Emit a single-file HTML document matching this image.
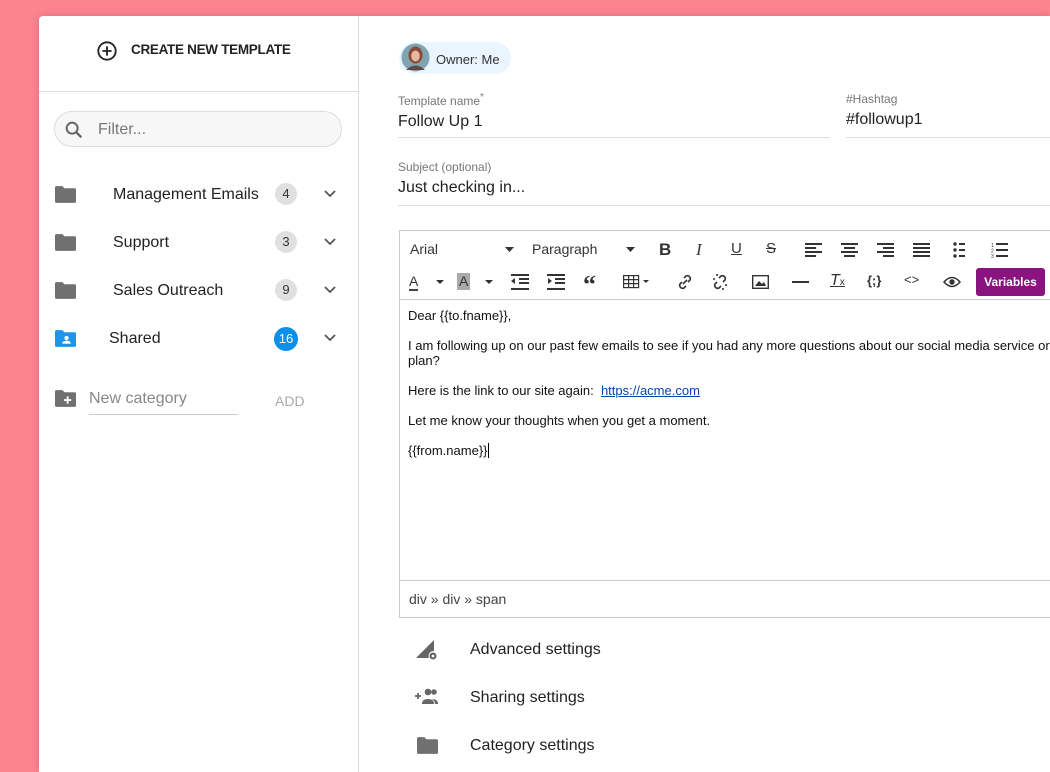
<!DOCTYPE html>
<html><head><style>
*{box-sizing:border-box;margin:0;padding:0}
html,body{width:1050px;height:772px;overflow:hidden}
body{background:#fc8490;font-family:"Liberation Sans",Roboto,sans-serif;color:#222;position:relative}
.card{position:absolute;left:39px;top:16px;width:1011px;height:756px;background:#fff;border-radius:4px 0 0 0;box-shadow:0 0 8px rgba(0,0,0,.15);overflow:hidden}
.side{position:absolute;left:0;top:0;width:320px;height:756px;border-right:1px solid #ddd}
.abs{position:absolute}
.cnt{position:absolute;width:22px;height:22px;border-radius:11px;background:#e0e0e0;font-size:13px;text-align:center;line-height:22px;color:#333}
.lbl{position:absolute;font-size:16px;color:#222}
.flabel{font-size:12px;color:#777}
.field{position:absolute;border-bottom:1px solid #ddd}
.field .v{font-size:16px;color:#222;margin-top:5px;height:22px}
.tb{position:absolute;font-size:15px;color:#333}
.ed{font-family:"Liberation Sans",Arial,sans-serif;font-size:13px;color:#111}
</style></head><body>
<div class="card">
 <div class="side">
  <svg class="abs" style="left:57px;top:24px" width="22" height="22" viewBox="0 0 24 24"><circle cx="12" cy="12" r="9.5" fill="none" stroke="#222" stroke-width="2"/><path d="M12 7v10M7 12h10" stroke="#222" stroke-width="2"/></svg>
  <div class="abs" style="left:92px;top:26px;font-size:13.5px;font-weight:bold;color:#222;letter-spacing:-.3px">CREATE NEW TEMPLATE</div>
  <div class="abs" style="left:0;top:75px;width:320px;border-top:1px solid #ddd"></div>
  <div class="abs" style="left:15px;top:95px;width:288px;height:36px;border:1px solid #ddd;border-radius:18px;background:#f7f7f7"></div>
  <svg class="abs" style="left:24px;top:103px" width="22" height="22" viewBox="0 0 24 24"><circle cx="10" cy="10" r="6" fill="none" stroke="#666" stroke-width="2.2"/><path d="M14.5 14.5l5.5 5.5" stroke="#666" stroke-width="2.6"/></svg>
  <div class="abs" style="left:59px;top:105px;font-size:16px;color:#777">Filter...</div>

  <svg class="abs" style="left:16px;top:170px" width="21" height="17" viewBox="0 0 20 16"><path d="M0 1.5Q0 0 1.5 0H7l2 2h9.5Q20 2 20 3.5v11q0 1.5-1.5 1.5h-17Q0 16 0 14.5z" fill="#707070"/></svg>
  <div class="lbl" style="left:74px;top:170px">Management Emails</div>
  <div class="cnt" style="left:236px;top:167px">4</div>
  <svg class="abs" style="left:283px;top:171px" width="16" height="14" viewBox="0 0 16 14"><path d="M3 4l5 5 5-5" fill="none" stroke="#555" stroke-width="1.8"/></svg>

  <svg class="abs" style="left:16px;top:218px" width="21" height="17" viewBox="0 0 20 16"><path d="M0 1.5Q0 0 1.5 0H7l2 2h9.5Q20 2 20 3.5v11q0 1.5-1.5 1.5h-17Q0 16 0 14.5z" fill="#707070"/></svg>
  <div class="lbl" style="left:74px;top:218px">Support</div>
  <div class="cnt" style="left:236px;top:215px">3</div>
  <svg class="abs" style="left:283px;top:219px" width="16" height="14" viewBox="0 0 16 14"><path d="M3 4l5 5 5-5" fill="none" stroke="#555" stroke-width="1.8"/></svg>

  <svg class="abs" style="left:16px;top:266px" width="21" height="17" viewBox="0 0 20 16"><path d="M0 1.5Q0 0 1.5 0H7l2 2h9.5Q20 2 20 3.5v11q0 1.5-1.5 1.5h-17Q0 16 0 14.5z" fill="#707070"/></svg>
  <div class="lbl" style="left:74px;top:266px">Sales Outreach</div>
  <div class="cnt" style="left:236px;top:263px">9</div>
  <svg class="abs" style="left:283px;top:267px" width="16" height="14" viewBox="0 0 16 14"><path d="M3 4l5 5 5-5" fill="none" stroke="#555" stroke-width="1.8"/></svg>

  <svg class="abs" style="left:16px;top:314px" width="21" height="17" viewBox="0 0 20 16"><path d="M0 1.5Q0 0 1.5 0H7l2 2h9.5Q20 2 20 3.5v11q0 1.5-1.5 1.5h-17Q0 16 0 14.5z" fill="#1e96e8"/><circle cx="11" cy="7.5" r="2" fill="#fff"/><path d="M7 13q0-3 4-3t4 3z" fill="#fff"/></svg>
  <div class="lbl" style="left:70px;top:314px">Shared</div>
  <div class="cnt" style="left:235px;top:311px;width:24px;height:24px;border-radius:12px;line-height:24px;background:#0c8fe8;color:#fff">16</div>
  <svg class="abs" style="left:283px;top:315px" width="16" height="14" viewBox="0 0 16 14"><path d="M3 4l5 5 5-5" fill="none" stroke="#555" stroke-width="1.8"/></svg>

  <svg class="abs" style="left:16px;top:374px" width="21" height="17" viewBox="0 0 20 16"><path d="M0 1.5Q0 0 1.5 0H7l2 2h9.5Q20 2 20 3.5v11q0 1.5-1.5 1.5h-17Q0 16 0 14.5z" fill="#707070"/><path d="M12 6v7M8.5 9.5h7" stroke="#fff" stroke-width="1.8"/></svg>
  <div class="abs" style="left:50px;top:374px;font-size:16px;color:#888;width:149px;height:25px;border-bottom:1px solid #ccc">New category</div>
  <div class="abs" style="left:236px;top:377px;font-size:14px;color:#aaa">ADD</div>
 </div>

 <div class="abs" style="left:360px;top:26px;width:112px;height:32px;border-radius:16px;background:#eaf5ff"></div>
 <svg class="abs" style="left:362px;top:27px" width="29" height="29" viewBox="0 0 29 29"><circle cx="14.5" cy="14.5" r="14" fill="#7fa3b0"/><ellipse cx="14.5" cy="12" rx="7" ry="8.5" fill="#8a4a35"/><ellipse cx="14.5" cy="13" rx="4.3" ry="5.5" fill="#e6b9a0"/><path d="M5 27q9.5-9 19 0" fill="#5e4a45"/></svg>
 <div class="abs" style="left:397px;top:36px;font-size:13px;color:#333">Owner: Me</div>

 <div class="field" style="left:359px;top:76px;width:432px;height:46px"><div class="flabel">Template name<sup>*</sup></div><div class="v">Follow Up 1</div></div>
 <div class="field" style="left:807px;top:76px;width:300px;height:46px"><div class="flabel">#Hashtag</div><div class="v">#followup1</div></div>
 <div class="field" style="left:359px;top:144px;width:760px;height:46px"><div class="flabel">Subject (optional)</div><div class="v">Just checking in...</div></div>

 <div class="abs" style="left:360px;top:214px;width:720px;height:388px;border:1px solid #ccc"></div>
 <div class="abs" style="left:361px;top:283px;width:720px;border-top:1px solid #ccc"></div>
 <div class="abs" style="left:361px;top:564px;width:720px;border-top:1px solid #ccc"></div>
 <div class="tb" style="left:371px;top:225px;font-size:14px">Arial</div>
 <svg class="abs" style="left:466px;top:231px" width="9" height="5"><path d="M0 0h9L4.5 5z" fill="#333"/></svg>
 <div class="tb" style="left:493px;top:225px;font-size:14px">Paragraph</div>
 <svg class="abs" style="left:587px;top:231px" width="9" height="5"><path d="M0 0h9L4.5 5z" fill="#333"/></svg>
 <div class="tb" style="left:620px;top:224px;font-weight:bold;font-size:17px">B</div>
 <div class="tb" style="left:657px;top:224px;font-style:italic;font-size:17px;font-family:'Liberation Serif'">I</div>
 <div class="tb" style="left:692px;top:224px;text-decoration:underline">U</div>
 <div class="tb" style="left:727px;top:224px;text-decoration:line-through">S</div>
 <svg class="abs" style="left:766px;top:226px" width="160" height="16" viewBox="0 0 160 16" fill="#333">
  <rect x="0" y="1" width="17" height="2"/><rect x="0" y="5" width="11" height="2"/><rect x="0" y="9" width="17" height="2"/><rect x="0" y="13" width="11" height="2"/>
  <rect x="36" y="1" width="17" height="2"/><rect x="39" y="5" width="11" height="2"/><rect x="36" y="9" width="17" height="2"/><rect x="39" y="13" width="11" height="2"/>
  <rect x="72" y="1" width="17" height="2"/><rect x="78" y="5" width="11" height="2"/><rect x="72" y="9" width="17" height="2"/><rect x="78" y="13" width="11" height="2"/>
  <rect x="108" y="1" width="17" height="2"/><rect x="108" y="5" width="17" height="2"/><rect x="108" y="9" width="17" height="2"/><rect x="108" y="13" width="17" height="2"/>
  <circle cx="150" cy="2" r="1.7"/><circle cx="150" cy="8" r="1.7"/><circle cx="150" cy="14" r="1.7"/><rect x="154" y="1" width="6" height="2"/><rect x="154" y="7" width="6" height="2"/><rect x="154" y="13" width="6" height="2"/>
 </svg>
 <svg class="abs" style="left:952px;top:226px" width="17" height="16" viewBox="0 0 17 16" fill="#333"><text x="0" y="5" font-size="5">1</text><text x="0" y="10.5" font-size="5">2</text><text x="0" y="16" font-size="5">3</text><rect x="5" y="1" width="12" height="2"/><rect x="5" y="7" width="12" height="2"/><rect x="5" y="13" width="12" height="2"/></svg>

 <div class="tb" style="left:370px;top:257px;font-size:14px;border-bottom:2px solid #444;line-height:16px">A</div>
 <svg class="abs" style="left:397px;top:264px" width="8" height="4"><path d="M0 0h8L4 4z" fill="#333"/></svg>
 <div class="tb" style="left:418px;top:257px;font-size:14px;background:#aaa;padding:0 2px;line-height:17px">A</div>
 <svg class="abs" style="left:446px;top:264px" width="8" height="4"><path d="M0 0h8L4 4z" fill="#333"/></svg>
 <svg class="abs" style="left:472px;top:258px" width="18" height="16" viewBox="0 0 18 16" fill="#333"><rect x="0" y="0" width="18" height="2"/><rect x="8" y="4" width="10" height="2"/><rect x="8" y="8" width="10" height="2"/><rect x="0" y="14" width="18" height="2"/><path d="M0 7l4-3v6z"/></svg>
 <svg class="abs" style="left:508px;top:258px" width="18" height="16" viewBox="0 0 18 16" fill="#333"><rect x="0" y="0" width="18" height="2"/><rect x="8" y="4" width="10" height="2"/><rect x="8" y="8" width="10" height="2"/><rect x="0" y="14" width="18" height="2"/><path d="M5 7l-4-3v6z"/></svg>
 <div class="tb" style="left:544px;top:254px;font-size:26px;font-weight:bold;font-family:'Liberation Serif'">“</div>
 <svg class="abs" style="left:584px;top:259px" width="30" height="14" viewBox="0 0 30 14" fill="none" stroke="#333" stroke-width="1.2"><rect x=".6" y=".6" width="15" height="12"/><path d="M.6 4.6h15M.6 8.6h15M5.6.6v12M10.6.6v12"/><path d="M20 5h6l-3 3z" fill="#333" stroke="none"/></svg>
 <svg class="abs" style="left:637px;top:257px" width="18" height="18" viewBox="0 0 18 18" fill="none" stroke="#333" stroke-width="1.6"><path d="M7 11l4-4M8 5l2-2a3 3 0 0 1 4 4l-2 2M10 13l-2 2a3 3 0 0 1-4-4l2-2"/></svg>
 <svg class="abs" style="left:672px;top:257px" width="18" height="18" viewBox="0 0 18 18" fill="none" stroke="#333" stroke-width="1.6"><path d="M8 5l2-2a3 3 0 0 1 4 4l-2 2M10 13l-2 2a3 3 0 0 1-4-4l2-2M2 6h2M6 1v2M16 12h-2M12 17v-2"/></svg>
 <svg class="abs" style="left:713px;top:259px" width="17" height="14" viewBox="0 0 17 14"><rect x=".7" y=".7" width="15.6" height="12.6" fill="none" stroke="#333" stroke-width="1.4"/><path d="M3 11l4-5 3 3 2-2 2 4z" fill="#333"/></svg>
 <div class="abs" style="left:753px;top:265px;width:17px;height:2px;background:#333"></div>
 <div class="tb" style="left:791px;top:256px;font-style:italic;font-size:16px;text-decoration:underline">T<span style="font-size:10px;font-style:normal;text-decoration:none">x</span></div>
 <div class="tb" style="left:828px;top:257px;font-size:13px;font-weight:bold">{;}</div>
 <div class="tb" style="left:865px;top:256px;font-size:13px">&lt;&gt;</div>
 <svg class="abs" style="left:904px;top:260px" width="18" height="12" viewBox="0 0 18 12"><path d="M1 6q8-9 16 0q-8 9-16 0z" fill="none" stroke="#333" stroke-width="1.5"/><circle cx="9" cy="6" r="2.7" fill="#333"/></svg>
 <div class="abs" style="left:937px;top:252px;width:69px;height:28px;background:#8a1380;border-radius:3px;color:#fff;font-size:12px;font-weight:bold;text-align:center;line-height:28px">Variables</div>

 <div class="abs ed" style="left:369px;top:292px;line-height:15px;width:648px">
  <div>Dear {{to.fname}},</div>
  <div style="margin-top:15px">I am following up on our past few emails to see if you had any more questions about our social media service or plan?</div>
  <div style="margin-top:15px">Here is the link to our site again:&nbsp; <span style="color:#0645ad;text-decoration:underline">https://acme.com</span></div>
  <div style="margin-top:15px">Let me know your thoughts when you get a moment.</div>
  <div style="margin-top:15px">{{from.name}}<span style="border-left:1px solid #000"></span></div>
 </div>
 <div class="abs" style="left:370px;top:575px;font-size:14px;color:#444">div » div » span</div>

 <svg class="abs" style="left:376px;top:622px" width="24" height="24" viewBox="0 0 24 24"><path d="M1 20L19 2v11a5 5 0 0 0-5 7z" fill="#666"/><circle cx="18" cy="18" r="3.5" fill="#666"/><circle cx="18" cy="18" r="1.3" fill="#fff"/></svg>
 <div class="lbl" style="left:431px;top:625px">Advanced settings</div>
 <svg class="abs" style="left:375px;top:671px" width="26" height="20" viewBox="0 0 26 20" fill="#666"><path d="M1 9h6M4 6v6" stroke="#666" stroke-width="1.8"/><circle cx="14" cy="5" r="3.3"/><circle cx="20" cy="5" r="2.8"/><path d="M8 17q0-5 6-5t6 5z"/><path d="M18 12q6 0 6 5h-3q0-3-3-5z"/></svg>
 <div class="lbl" style="left:431px;top:673px">Sharing settings</div>
 <svg class="abs" style="left:378px;top:721px" width="21" height="17" viewBox="0 0 20 16"><path d="M0 1.5Q0 0 1.5 0H7l2 2h9.5Q20 2 20 3.5v11q0 1.5-1.5 1.5h-17Q0 16 0 14.5z" fill="#707070"/></svg>
 <div class="lbl" style="left:431px;top:721px">Category settings</div>
</div>
</body></html>
